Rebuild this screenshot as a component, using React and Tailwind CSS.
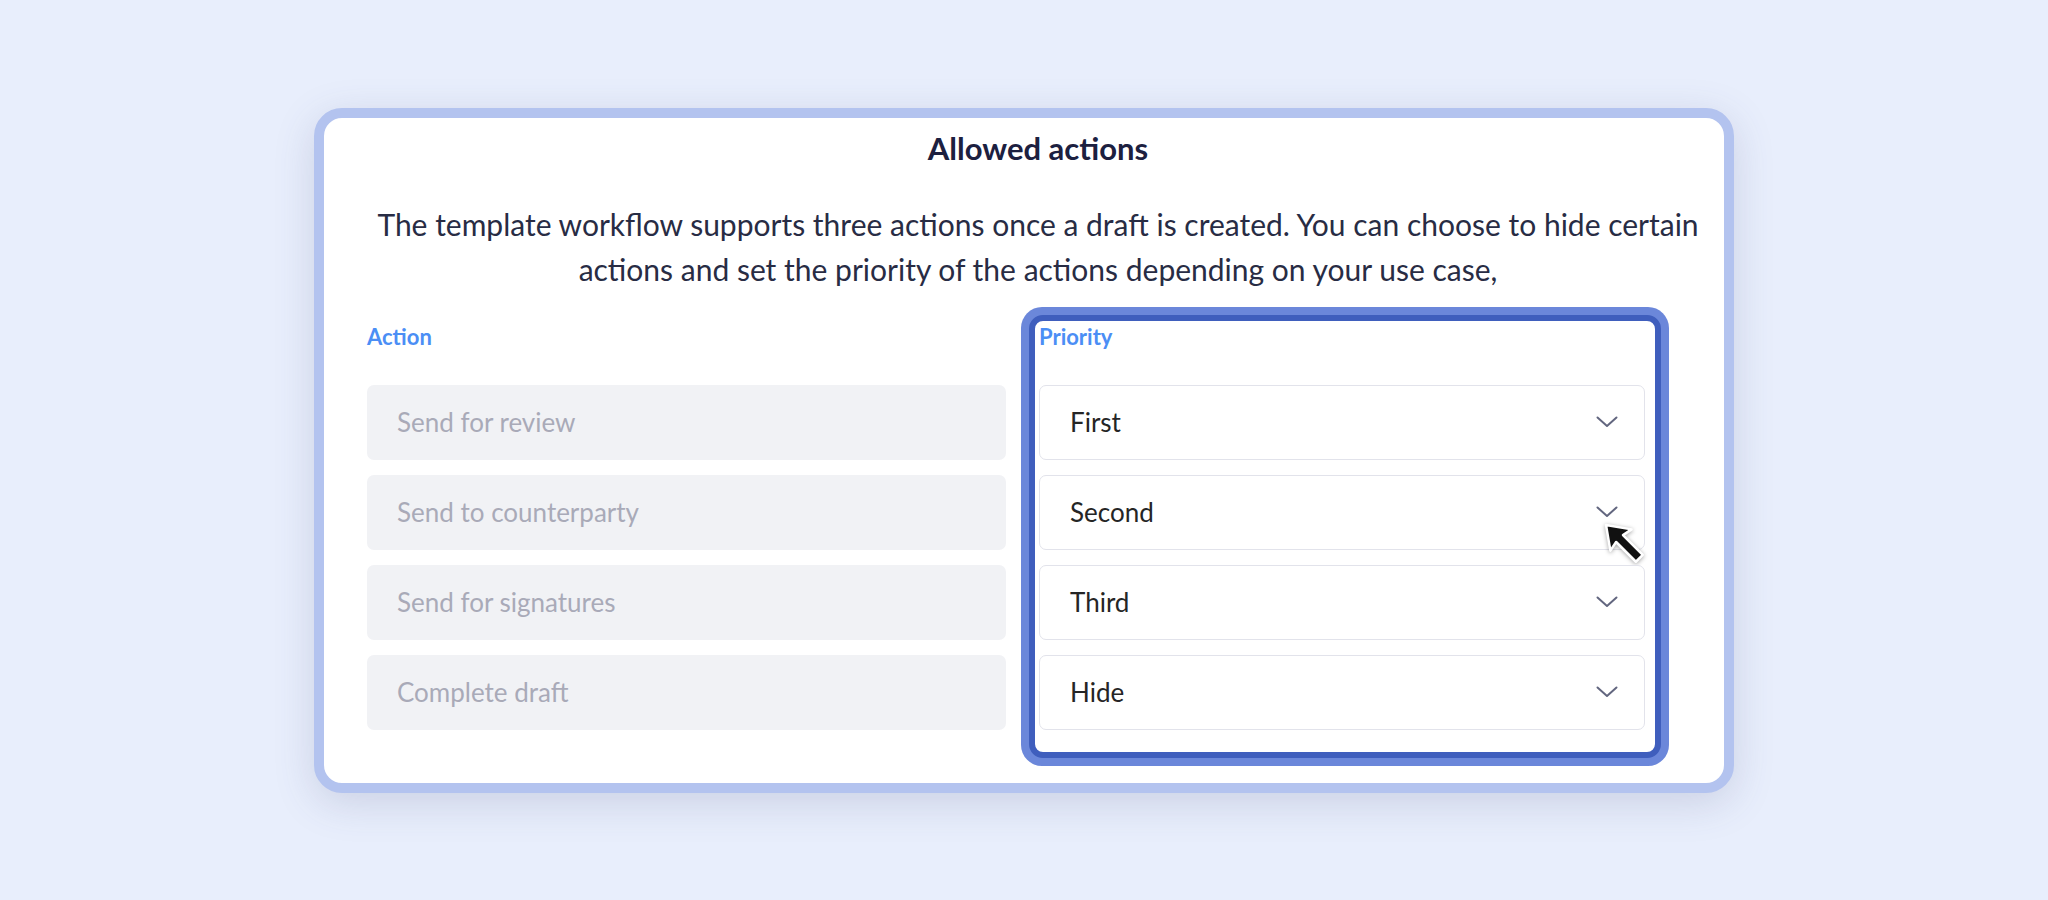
import React from 'react';

const actions = ['Send for review', 'Send to counterparty', 'Send for signatures', 'Complete draft'];
const priorities = ['First', 'Second', 'Third', 'Hide'];

const Chevron = () => (
  <svg className="w-[22px] h-[12px] text-[#62667f]" viewBox="0 0 22 12" fill="none" stroke="currentColor">
    <path d="M1.5 1.5 L11 10 L20.5 1.5" strokeWidth={2} strokeLinecap="round" strokeLinejoin="round" />
  </svg>
);

const Cursor = () => (
  <svg
    className="absolute left-[561px] top-[44px] w-[52px] h-[52px] drop-shadow-[0_1px_2px_rgba(0,0,0,0.35)]"
    viewBox="0 0 52 52"
  >
    <g transform="translate(5 5) scale(1.25)">
      <polygon
        points="0,0 20.5,3.5 13.6,8.1 29.4,23.9 23.9,29.4 8.1,13.6 3.5,20.5"
        fill="#111111"
        stroke="#ffffff"
        strokeWidth={2}
        strokeLinejoin="round"
      />
    </g>
  </svg>
);

export default function App() {
  return (
    <div className="flex h-[900px] w-full items-center justify-center bg-[#e8eefc] font-['Lato','Noto_Sans',sans-serif]">
      <div className="w-[1420px] h-[685px] rounded-[28px] border-[10px] border-[#b3c3ef] bg-white shadow-[0_10px_40px_rgba(70,80,120,0.18)]">
        <div className="pl-[43px] pr-[15px] pt-[10px]">
          {/* Header */}
          <h1 className="text-center text-[31px] font-bold leading-[40px] text-[#1c2040]">Allowed actions</h1>
          <p className="mt-[34px] text-center text-[30px] leading-[45px] text-[#282c44]">
            The template workflow supports three actions once a draft is created. You can choose to hide certain
            <br />
            actions and set the priority of the actions depending on your use case,
          </p>

          {/* Columns */}
          <div className="mt-[15px] flex items-start gap-[15px]">
            <div className="w-[639px] pt-[18px]">
              <div className="text-[22px] font-bold leading-[24px] text-[#4b8ef5]">Action</div>
              <div className="mt-[36px] flex flex-col gap-[15px]">
                {actions.map((a) => (
                  <div key={a} className="flex h-[75px] items-center rounded-[7px] bg-[#f1f2f5] pl-[30px] text-[26px] text-[#a9aab8]">
                    {a}
                  </div>
                ))}
              </div>
            </div>

            <div className="w-[648px] rounded-[21px] bg-[#6b87da] p-[8px]">
              <div className="rounded-[14px] border-[6px] border-[#3f5ebd] bg-white pl-[4px] pr-[10px] pt-[4px] pb-[22px]">
                <div className="text-[22px] font-bold leading-[24px] text-[#4b8ef5]">Priority</div>
                <div className="mt-[36px] flex flex-col gap-[15px]">
                  {priorities.map((p, i) => (
                    <div
                      key={p}
                      className="relative flex h-[75px] items-center justify-between rounded-[7px] border border-[#e2e3eb] bg-white pl-[30px] pr-[26px] text-[26px] text-[#252525]"
                    >
                      <span>{p}</span>
                      <Chevron />
                      {i === 1 && <Cursor />}
                    </div>
                  ))}
                </div>
              </div>
            </div>
          </div>
        </div>
      </div>
    </div>
  );
}
